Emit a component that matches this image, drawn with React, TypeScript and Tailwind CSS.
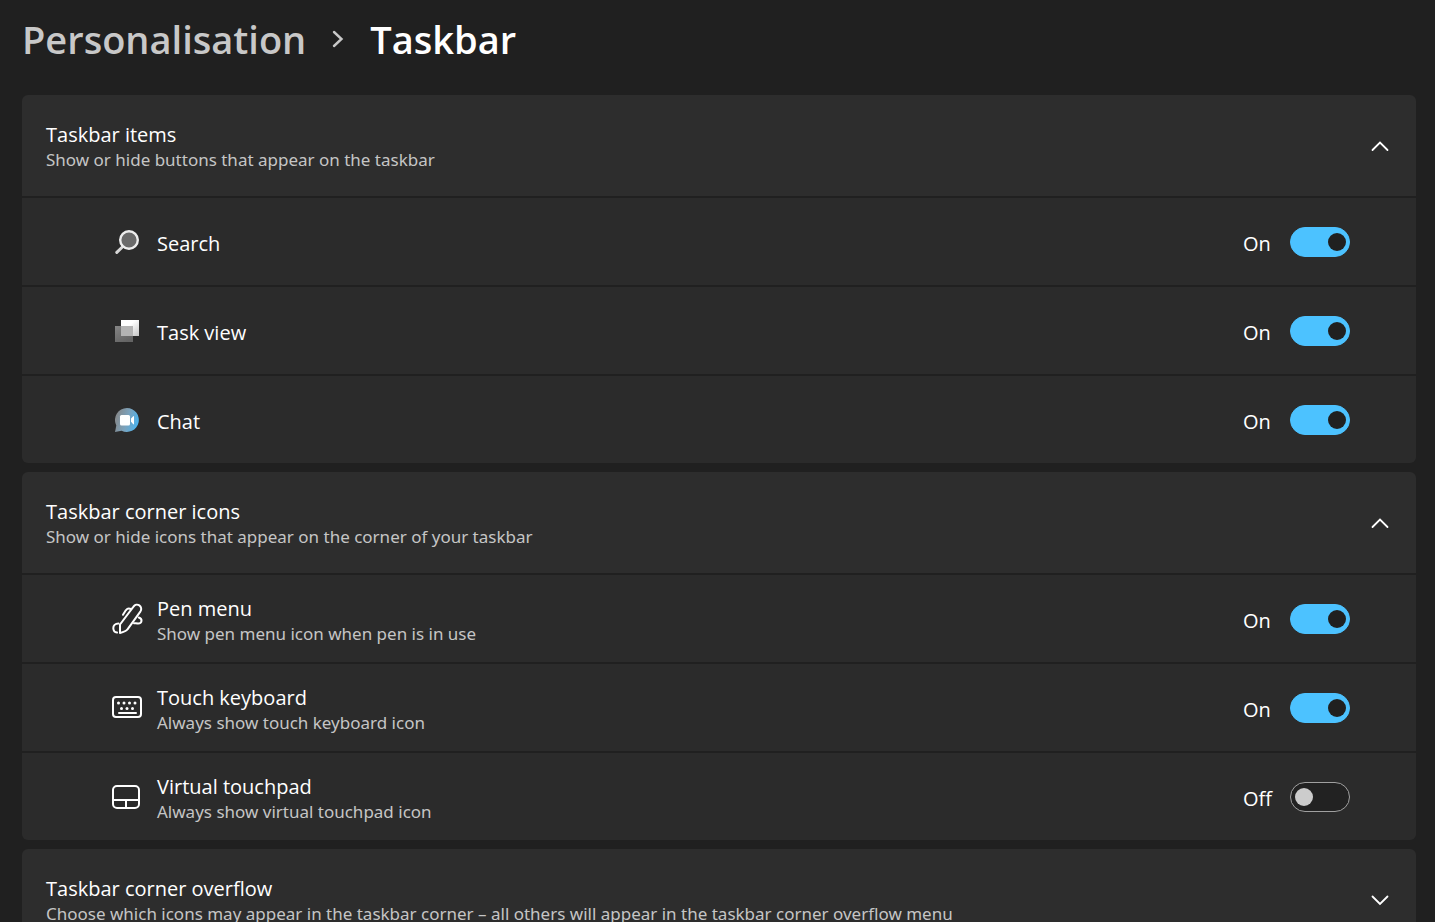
import React, { useState } from "react";

type Item = {
  id: string;
  title: string;
  description?: string;
  icon: React.ReactNode;
  on: boolean;
};

function SearchIcon() {
  return (
    <svg className="size-6" viewBox="0 0 24 24" fill="none">
      <path d="M8.4 16 1.8 22.4" stroke="#d6d6d6" strokeWidth="3" strokeLinecap="round" />
      <circle cx="14" cy="10" r="8.8" fill="#6a6a6a" stroke="#ededed" strokeWidth="2.4" />
    </svg>
  );
}

function TaskViewIcon() {
  return (
    <svg className="size-6" viewBox="0 0 24 24">
      <defs>
        <linearGradient id="front" x1="0" y1="0" x2="1" y2="1">
          <stop offset="0.4" stopColor="#ffffff" />
          <stop offset="1" stopColor="#c4c4c4" />
        </linearGradient>
        <linearGradient id="back" x1="0" y1="0" x2="0.6" y2="1">
          <stop offset="0" stopColor="#858585" />
          <stop offset="1" stopColor="#646464" />
        </linearGradient>
      </defs>
      <rect x="0" y="7" width="18" height="16" fill="url(#back)" />
      <rect x="6" y="1" width="18" height="16" fill="url(#front)" />
      <rect x="6" y="7" width="12" height="10" fill="#b4b4b4" />
    </svg>
  );
}

function ChatIcon() {
  return (
    <svg className="size-6" viewBox="0 0 24 24">
      <defs>
        <linearGradient id="bubble" x1="0" y1="0.2" x2="1" y2="0.5">
          <stop offset="0.1" stopColor="#858a8e" />
          <stop offset="0.55" stopColor="#7ba3bd" />
          <stop offset="1" stopColor="#4cb2ec" />
        </linearGradient>
      </defs>
      <path d="M12 0a12 12 0 1 1-5.4 22.8L0 24l1.3-6.5A12 12 0 0 1 12 0Z" fill="url(#bubble)" />
      <rect x="5" y="7" width="10" height="10.5" rx="1.5" fill="#fff" />
      <path d="M16 10.6 18.3 8.2q.7-.5.7.4v7.2q0 .9-.7.4L16 13.8Z" fill="#fff" />
    </svg>
  );
}

function PenIcon() {
  return (
    <svg className="size-8" viewBox="0 0 32 32" fill="none" stroke="#fff" strokeWidth="2" strokeLinecap="round" strokeLinejoin="round">
      <path d="M9 30V21.500L22.500 3.600a4.200 4.200 0 0 1 7 4.700L16.500 26.300Q15 28.500 9 30Z" />
      <path d="M12 11.800 14.800 7.300q2.200-2.800 5-1.300" />
      <path d="M7.500 20.500c-3.500 0-5.300 2.100-5.200 4.700.1 2.600 1.600 4.100 3.700 4.400" />
      <path d="M27.800 14.500c4 1.300 3.400 6-.6 6-1.800 0-2.700-.3-4.200-.3" />
    </svg>
  );
}

function KeyboardIcon() {
  return (
    <svg className="size-8" viewBox="0 0 32 32" fill="#fff">
      <rect x="2" y="5" width="28" height="20" rx="3" fill="none" stroke="#fff" strokeWidth="2" />
      <circle cx="7.5" cy="11" r="1.5" />
      <circle cx="13" cy="11" r="1.5" />
      <circle cx="18.5" cy="11" r="1.5" />
      <circle cx="24" cy="11" r="1.5" />
      <circle cx="10.5" cy="16.5" r="1.5" />
      <circle cx="16" cy="16.5" r="1.5" />
      <circle cx="21.5" cy="16.5" r="1.5" />
      <rect x="7" y="20" width="19" height="2" rx="1" />
    </svg>
  );
}

function TouchpadIcon() {
  return (
    <svg className="size-8" viewBox="0 0 32 32" fill="none" stroke="#fff" strokeWidth="2">
      <rect x="2" y="5" width="26" height="22" rx="4" />
      <path d="M2 19h26M15 19v8" />
    </svg>
  );
}

const taskbarItems: Item[] = [
  { id: "search", title: "Search", icon: <SearchIcon />, on: true },
  { id: "task-view", title: "Task view", icon: <TaskViewIcon />, on: true },
  { id: "chat", title: "Chat", icon: <ChatIcon />, on: true },
];

const cornerIcons: Item[] = [
  { id: "pen", title: "Pen menu", description: "Show pen menu icon when pen is in use", icon: <PenIcon />, on: true },
  { id: "keyboard", title: "Touch keyboard", description: "Always show touch keyboard icon", icon: <KeyboardIcon />, on: true },
  { id: "touchpad", title: "Virtual touchpad", description: "Always show virtual touchpad icon", icon: <TouchpadIcon />, on: false },
];

function SettingText({ title, description }: { title: string; description?: string }) {
  return (
    <>
      <span className="block text-[20px] leading-[26px]">{title}</span>
      {description && (
        <span className="block font-['Noto_Sans',sans-serif] text-[17px] leading-6 text-[#c5c5c5]">{description}</span>
      )}
    </>
  );
}

function SettingRow({ item }: { item: Item }) {
  const [on, setOn] = useState(item.on);

  return (
    <div className="mt-0.5 flex min-h-[87px] items-center bg-[#2b2b2b] pr-[66px] pl-[88px]">
      <span className="flex w-[34px] shrink-0 justify-center">{item.icon}</span>
      <label htmlFor={item.id} className="ml-[13px] flex-1 pt-1">
        <SettingText title={item.title} description={item.description} />
      </label>
      <span className="w-[47px] pt-1 text-[20px] leading-[26px]">{on ? "On" : "Off"}</span>
      <input
        id={item.id}
        type="checkbox"
        role="switch"
        checked={on}
        onChange={(e) => setOn(e.target.checked)}
        className="flex h-[30px] w-[60px] shrink-0 appearance-none items-center rounded-full border border-[#a0a0a0] bg-[#222222] pr-[3px] pl-1 before:size-[18px] before:rounded-full before:bg-[#cccccc] checked:justify-end checked:border-[#4cc2ff] checked:bg-[#4cc2ff] checked:before:bg-[#202020]"
      />
    </div>
  );
}

function Section({ title, description, items = [] }: { title: string; description: string; items?: Item[] }) {
  const [open, setOpen] = useState(items.length > 0);

  return (
    <section className="overflow-hidden rounded-md">
      <button
        type="button"
        aria-expanded={open}
        onClick={() => setOpen(!open)}
        className="flex min-h-[101px] w-full items-center justify-between bg-[#2d2d2d] pr-[27px] pl-6 text-left"
      >
        <span className="pt-0.5">
          <SettingText title={title} description={description} />
        </span>
        <svg className="h-3 w-[18px] shrink-0" viewBox="0 0 18 12" fill="none" stroke="#fff" strokeWidth="1.8" strokeLinecap="round">
          <path d={open ? "M1.5 10 9 2.5 16.5 10" : "M1.5 2.5 9 10 16.5 2.5"} />
        </svg>
      </button>
      {open && items.map((item) => <SettingRow key={item.id} item={item} />)}
    </section>
  );
}

export default function App() {
  return (
    <main className="h-screen overflow-hidden bg-[#202020] pr-[19px] pl-[22px] font-['Open_Sans','Noto_Sans',sans-serif] text-white">
      <nav aria-label="Breadcrumb" className="flex h-[95px] items-start pt-[11px] text-[38px] leading-[56px] font-semibold">
        <a href="#" className="text-[#c8c8c8]">Personalisation</a>
        <svg className="mx-[26px] mt-[19px] h-[18px] w-3" viewBox="0 0 12 18" fill="none" stroke="#c8c8c8" strokeWidth="2.4" strokeLinecap="round">
          <path d="M2 2 9.5 9 2 16" />
        </svg>
        <h1>Taskbar</h1>
      </nav>
      <div className="flex flex-col gap-[9px]">
        <Section
          title="Taskbar items"
          description="Show or hide buttons that appear on the taskbar"
          items={taskbarItems}
        />
        <Section
          title="Taskbar corner icons"
          description="Show or hide icons that appear on the corner of your taskbar"
          items={cornerIcons}
        />
        <Section
          title="Taskbar corner overflow"
          description="Choose which icons may appear in the taskbar corner – all others will appear in the taskbar corner overflow menu"
        />
      </div>
    </main>
  );
}
